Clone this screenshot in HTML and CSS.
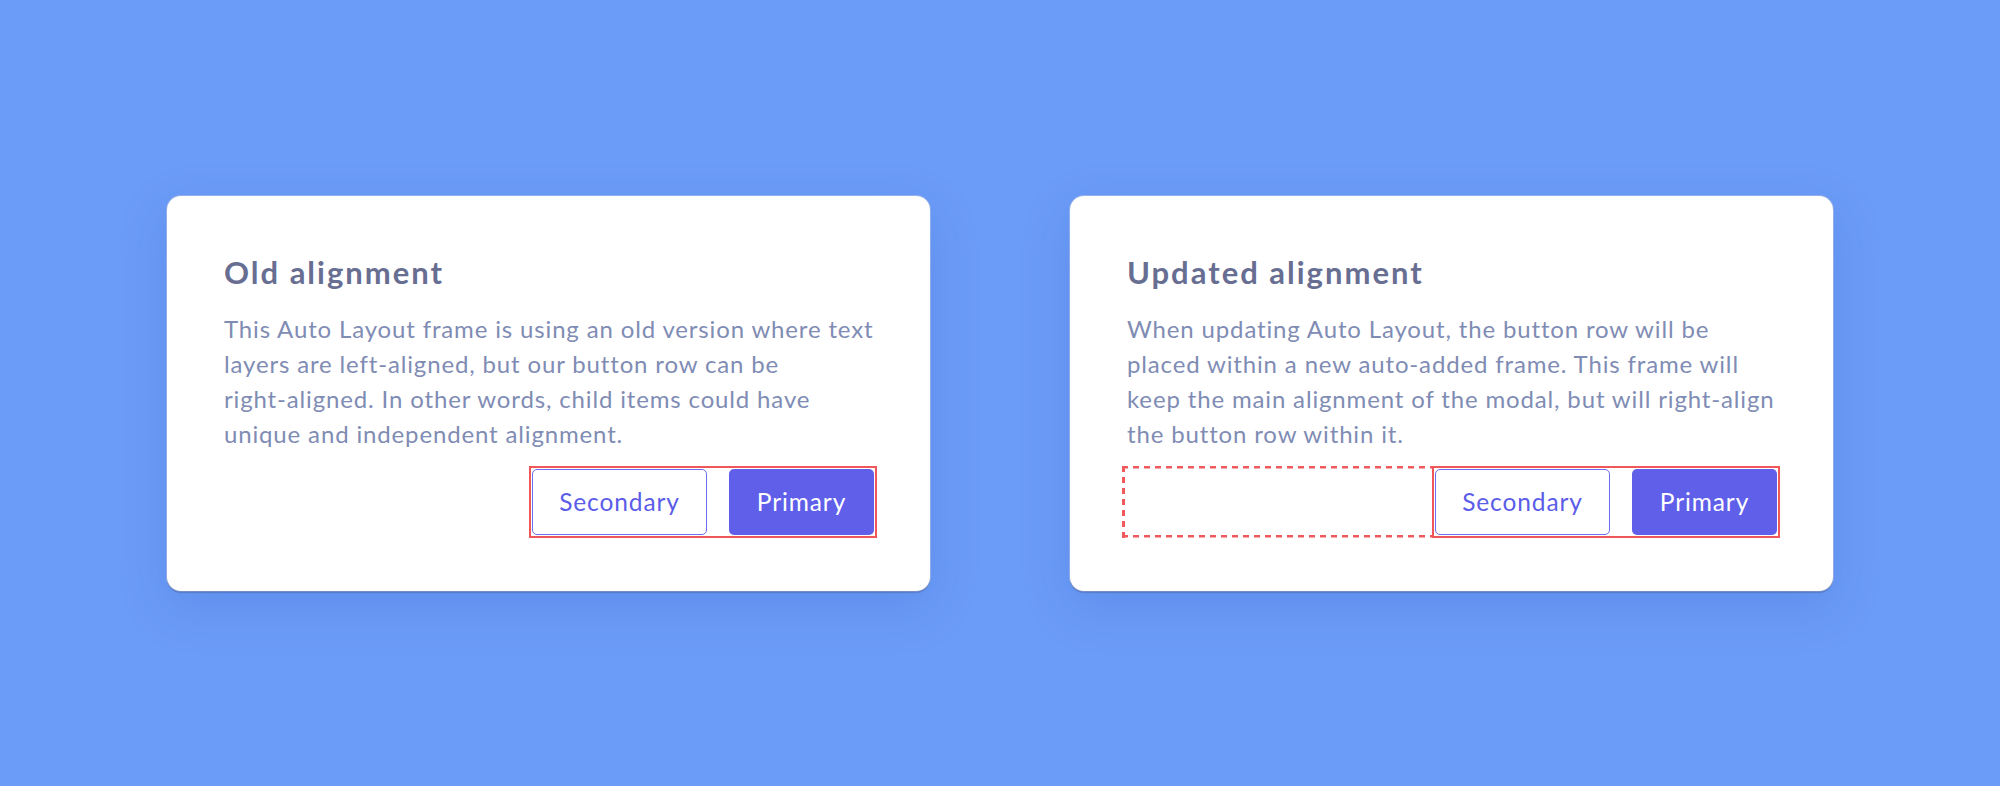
FILE: index.html
```html
<!DOCTYPE html>
<html lang="en">
<head>
<meta charset="utf-8">
<title>Auto Layout alignment</title>
<link rel="stylesheet" href="styles.css">
</head>
<body>
<main class="stage">
  <section class="card">
    <h2 class="card-title">Old alignment</h2>
    <p class="card-text">This Auto Layout frame is using an old version where text<br>layers are left-aligned, but our button row can be<br>right-aligned. In other words, child items could have<br>unique and independent alignment.</p>
    <div class="row row-old">
      <div class="frame">
        <button class="btn btn-secondary">Secondary</button>
        <button class="btn btn-primary">Primary</button>
      </div>
    </div>
  </section>
  <section class="card">
    <h2 class="card-title">Updated alignment</h2>
    <p class="card-text">When updating Auto Layout, the button row will be<br>placed within a new auto-added frame. This frame will<br>keep the main alignment of the modal, but will right-align<br>the button row within it.</p>
    <div class="row">
      <div class="spacer-frame"></div>
      <div class="frame">
        <button class="btn btn-secondary">Secondary</button>
        <button class="btn btn-primary">Primary</button>
      </div>
    </div>
  </section>
</main>
</body>
</html>
```
FILE: styles.css
```css
* { box-sizing: border-box; }
html, body { margin: 0; padding: 0; }
body {
  width: 2000px;
  height: 786px;
  background: #6b9cf7;
  font-family: Lato, "Noto Sans", sans-serif;
  overflow: hidden;
}
.stage {
  height: 786px;
  display: flex;
  align-items: center;
  justify-content: center;
  gap: 140px;
}
.card {
  width: 763px;
  height: 395px;
  background: #ffffff;
  border-radius: 14px;
  padding: 58px 53px 53px 52px;
  display: flex;
  flex-direction: column;
  box-shadow: 0 1.5px 1px rgba(60, 70, 110, 0.3), 0 0 0 1px rgba(190, 200, 225, 0.5), 0 16px 50px rgba(40, 80, 190, 0.18);
}
.card-title {
  margin: 0 0 0 5px;
  font-size: 31px;
  line-height: 36px;
  font-weight: 700;
  letter-spacing: 2px;
  color: #686e92;
}
.card-text {
  margin: 21px -20px 0 5px;
  font-size: 24px;
  line-height: 35px;
  letter-spacing: 0.85px;
  color: #7f8cb4;
  white-space: nowrap;
}
.row {
  margin-top: auto;
  display: flex;
  height: 72px;
}
.row-old { justify-content: flex-end; }
.spacer-frame {
  flex: 1;
  background:
    repeating-linear-gradient(90deg, #f05a5d 0 6px, transparent 6px 11px) top left / 100% 2.5px no-repeat,
    repeating-linear-gradient(90deg, #f05a5d 0 6px, transparent 6px 11px) bottom left / 100% 2.5px no-repeat,
    repeating-linear-gradient(180deg, #f05a5d 0 6px, transparent 6px 11px) top left / 3px 100% no-repeat;
}
.frame {
  display: flex;
  gap: 22px;
  padding: 1px;
  border: 2px solid #f0575a;
}
.btn {
  height: 66px;
  border-radius: 5px;
  font-family: Lato, "Noto Sans", sans-serif;
  font-size: 24.5px;
  letter-spacing: 0.9px;
  padding: 0;
  cursor: pointer;
}
.btn-secondary {
  width: 175px;
  background: #ffffff;
  border: 1px solid #6c6ff0;
  color: #5b5ce8;
}
.btn-primary {
  width: 145px;
  background: #5f5fea;
  border: none;
  color: #ffffff;
}
```
